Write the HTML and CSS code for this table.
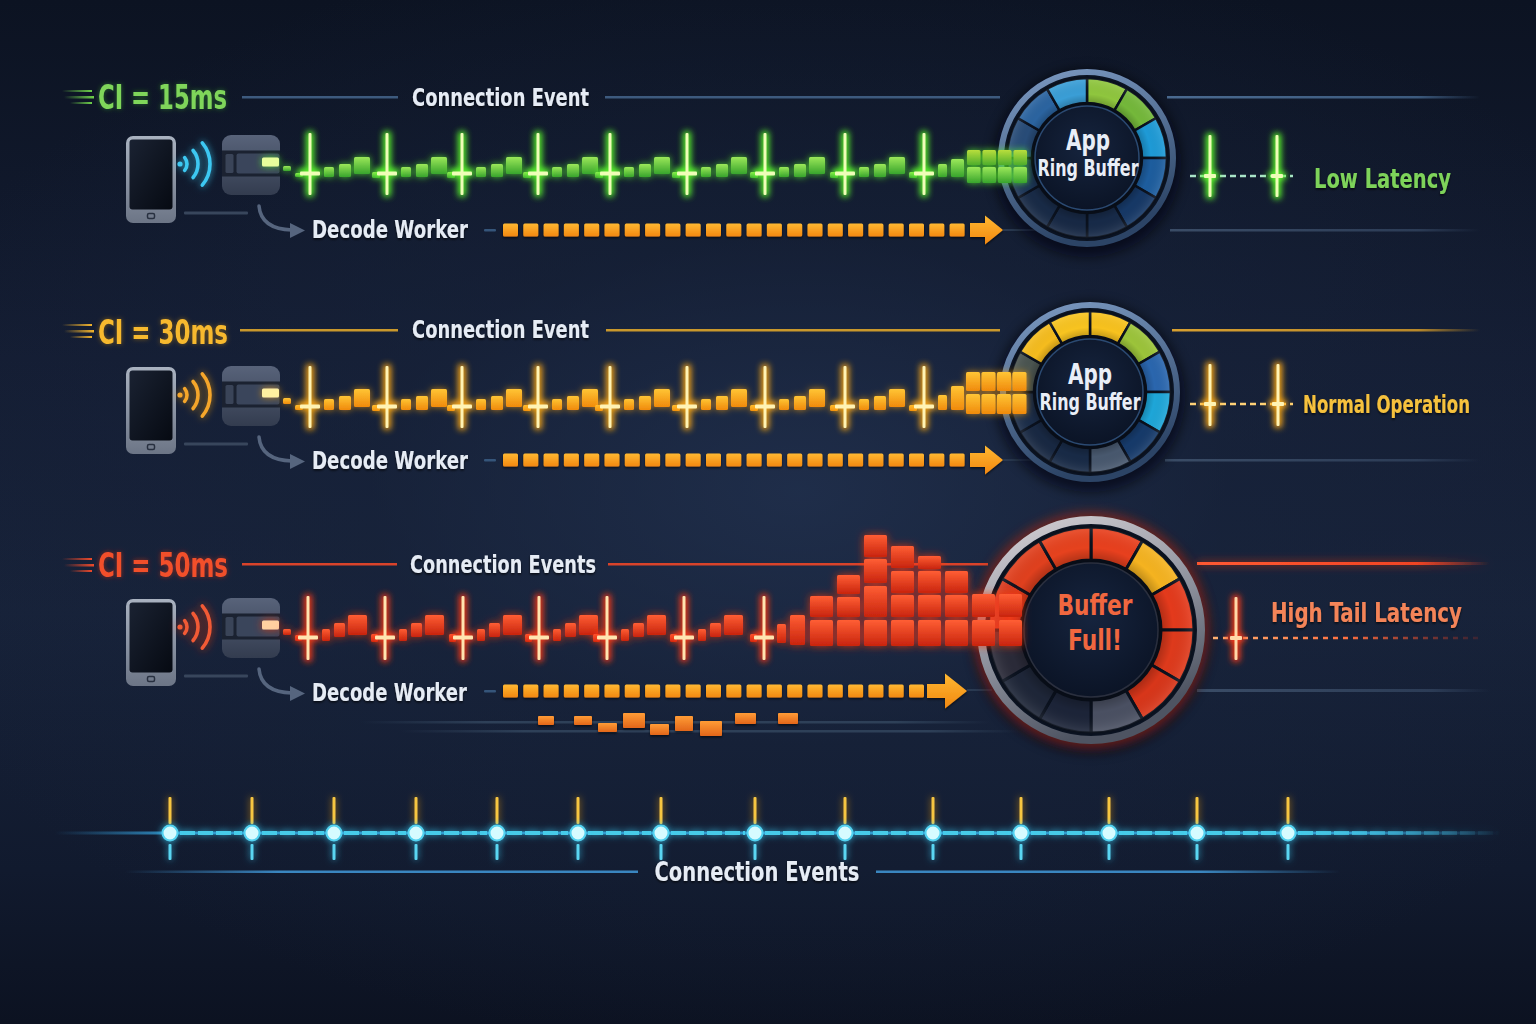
FILE: index.html
```html
<!DOCTYPE html>
<html lang="en">
<head>
<meta charset="utf-8">
<title>Connection Interval vs Ring Buffer Latency</title>
<link rel="stylesheet" href="styles.css">
</head>
<body>
<main class="scene">
  <svg class="defs" width="0" height="0" aria-hidden="true">
    <defs>
      <linearGradient id="gGreen" x1="0" y1="0" x2="0" y2="1"><stop offset="0" stop-color="#9be85a"/><stop offset="1" stop-color="#38a42c"/></linearGradient>
      <linearGradient id="gLime" x1="0" y1="0" x2="0" y2="1"><stop offset="0" stop-color="#b8de3c"/><stop offset="1" stop-color="#4fae2c"/></linearGradient>
      <linearGradient id="gAmber" x1="0" y1="0" x2="0" y2="1"><stop offset="0" stop-color="#ffc535"/><stop offset="1" stop-color="#f08a0c"/></linearGradient>
      <linearGradient id="gRed" x1="0" y1="0" x2="0" y2="1"><stop offset="0" stop-color="#ff5e34"/><stop offset="1" stop-color="#c8240e"/></linearGradient>
      <linearGradient id="gOrange" x1="0" y1="0" x2="0" y2="1"><stop offset="0" stop-color="#ffb832"/><stop offset="1" stop-color="#f28810"/></linearGradient>
      <linearGradient id="gOrangeLow" x1="0" y1="0" x2="0" y2="1"><stop offset="0" stop-color="#ff9c36"/><stop offset="1" stop-color="#e2661a"/></linearGradient>
      <linearGradient id="phoneFrame" x1="0" y1="0" x2="0" y2="1"><stop offset="0" stop-color="#a9b2c0"/><stop offset="1" stop-color="#6c7586"/></linearGradient>
      <linearGradient id="phoneScreen" x1="0" y1="0" x2="1" y2="1"><stop offset="0" stop-color="#1a2232"/><stop offset="1" stop-color="#060a12"/></linearGradient>
      <linearGradient id="devBody" x1="0" y1="0" x2="0" y2="1"><stop offset="0" stop-color="#58637a"/><stop offset="1" stop-color="#333c4f"/></linearGradient>
      <linearGradient id="ringBlue" x1="0" y1="0" x2="0.3" y2="1"><stop offset="0" stop-color="#7e9cc4"/><stop offset="1" stop-color="#2c4466"/></linearGradient>
      <linearGradient id="ringSilver" x1="0" y1="0" x2="0.4" y2="1"><stop offset="0" stop-color="#d8d4d8"/><stop offset="0.6" stop-color="#8a8e9a"/><stop offset="1" stop-color="#4e5462"/></linearGradient>
      <radialGradient id="coreFill" cx="0.5" cy="0.4" r="0.6"><stop offset="0" stop-color="#16243e"/><stop offset="1" stop-color="#0b1426"/></radialGradient>
      <radialGradient id="segShade" cx="0.5" cy="0.5" r="0.5"><stop offset="0.62" stop-color="#000" stop-opacity="0.35"/><stop offset="0.8" stop-color="#000" stop-opacity="0"/><stop offset="0.97" stop-color="#fff" stop-opacity="0.08"/><stop offset="1" stop-color="#000" stop-opacity="0.2"/></radialGradient>
      <linearGradient id="spdGreen" x1="0" y1="0" x2="1" y2="0"><stop offset="0" stop-color="#6fd24a" stop-opacity="0"/><stop offset="1" stop-color="#6fd24a"/></linearGradient>
      <linearGradient id="spdAmber" x1="0" y1="0" x2="1" y2="0"><stop offset="0" stop-color="#f5b52c" stop-opacity="0"/><stop offset="1" stop-color="#f5b52c"/></linearGradient>
      <linearGradient id="spdRed" x1="0" y1="0" x2="1" y2="0"><stop offset="0" stop-color="#f04a2a" stop-opacity="0"/><stop offset="1" stop-color="#f04a2a"/></linearGradient>
      <linearGradient id="fadeBlueR" x1="0" y1="0" x2="1" y2="0"><stop offset="0" stop-color="#4a6a90"/><stop offset="0.8" stop-color="#3c5a7e"/><stop offset="1" stop-color="#3c5a7e" stop-opacity="0"/></linearGradient>
      <linearGradient id="fadeAmberR" x1="0" y1="0" x2="1" y2="0"><stop offset="0" stop-color="#d8a030"/><stop offset="0.8" stop-color="#b8882a"/><stop offset="1" stop-color="#b8882a" stop-opacity="0"/></linearGradient>
      <linearGradient id="fadeRedR" x1="0" y1="0" x2="1" y2="0"><stop offset="0" stop-color="#ff5a32"/><stop offset="0.75" stop-color="#f04424"/><stop offset="1" stop-color="#f04424" stop-opacity="0"/></linearGradient>
      <linearGradient id="fadeDimR" x1="0" y1="0" x2="1" y2="0"><stop offset="0" stop-color="#3a4c66"/><stop offset="0.8" stop-color="#2c3c56"/><stop offset="1" stop-color="#2c3c56" stop-opacity="0"/></linearGradient>
      <linearGradient id="fadeDimBoth" x1="0" y1="0" x2="1" y2="0"><stop offset="0" stop-color="#2e4058" stop-opacity="0"/><stop offset="0.2" stop-color="#2e4058"/><stop offset="0.85" stop-color="#2e4058"/><stop offset="1" stop-color="#2e4058" stop-opacity="0"/></linearGradient>
      <linearGradient id="cyanFade" x1="0" y1="0" x2="1" y2="0"><stop offset="0" stop-color="#2a7ab0" stop-opacity="0"/><stop offset="0.08" stop-color="#2f8cc0"/><stop offset="0.9" stop-color="#2f8cc0"/><stop offset="1" stop-color="#2a7ab0" stop-opacity="0"/></linearGradient>
      <linearGradient id="blueFadeL" x1="0" y1="0" x2="1" y2="0"><stop offset="0" stop-color="#3a86c0" stop-opacity="0"/><stop offset="0.3" stop-color="#3a86c0"/><stop offset="1" stop-color="#3a86c0"/></linearGradient>
      <linearGradient id="blueFadeR" x1="0" y1="0" x2="1" y2="0"><stop offset="0" stop-color="#3a86c0"/><stop offset="0.7" stop-color="#3a86c0"/><stop offset="1" stop-color="#3a86c0" stop-opacity="0"/></linearGradient>
      <linearGradient id="redDotFade" gradientUnits="userSpaceOnUse" x1="1213" y1="0" x2="1480" y2="0"><stop offset="0" stop-color="#ffb070"/><stop offset="0.5" stop-color="#ff7040"/><stop offset="1" stop-color="#c03020" stop-opacity="0.2"/></linearGradient>
      <linearGradient id="cyanDashFade" gradientUnits="userSpaceOnUse" x1="1298" y1="0" x2="1500" y2="0"><stop offset="0" stop-color="#46cbe8"/><stop offset="1" stop-color="#46cbe8" stop-opacity="0"/></linearGradient>

      <filter id="fGreen" filterUnits="userSpaceOnUse" x="-50" y="-50" width="1650" height="1130">
        <feGaussianBlur in="SourceAlpha" stdDeviation="3.5" result="b"/><feFlood flood-color="#5cff2a" flood-opacity="0.75"/><feComposite in2="b" operator="in" result="g"/>
        <feMerge><feMergeNode in="g"/><feMergeNode in="SourceGraphic"/></feMerge></filter>
      <filter id="fAmber" filterUnits="userSpaceOnUse" x="-50" y="-50" width="1650" height="1130">
        <feGaussianBlur in="SourceAlpha" stdDeviation="3.5" result="b"/><feFlood flood-color="#ffa516" flood-opacity="0.7"/><feComposite in2="b" operator="in" result="g"/>
        <feMerge><feMergeNode in="g"/><feMergeNode in="SourceGraphic"/></feMerge></filter>
      <filter id="fRed" filterUnits="userSpaceOnUse" x="-50" y="-50" width="1650" height="1130">
        <feGaussianBlur in="SourceAlpha" stdDeviation="4" result="b"/><feFlood flood-color="#ff3812" flood-opacity="0.75"/><feComposite in2="b" operator="in" result="g"/>
        <feMerge><feMergeNode in="g"/><feMergeNode in="SourceGraphic"/></feMerge></filter>
      <filter id="fCyan" filterUnits="userSpaceOnUse" x="-50" y="-50" width="1650" height="1130">
        <feGaussianBlur in="SourceAlpha" stdDeviation="3.5" result="b"/><feFlood flood-color="#3ad4ff" flood-opacity="0.8"/><feComposite in2="b" operator="in" result="g"/>
        <feMerge><feMergeNode in="g"/><feMergeNode in="SourceGraphic"/></feMerge></filter>
      <filter id="blur3" filterUnits="userSpaceOnUse" x="-50" y="-50" width="1650" height="1130"><feGaussianBlur stdDeviation="3"/></filter>
      <filter id="blur6" filterUnits="userSpaceOnUse" x="-50" y="-50" width="1650" height="1130"><feGaussianBlur stdDeviation="6"/></filter>
      <filter id="shadow" filterUnits="userSpaceOnUse" x="-50" y="-50" width="1650" height="1130"><feDropShadow dx="0" dy="1.5" stdDeviation="1.2" flood-color="#000" flood-opacity="0.6"/></filter>
      <filter id="txtShadow" filterUnits="userSpaceOnUse" x="-50" y="-50" width="1650" height="1130"><feDropShadow dx="0" dy="1.5" stdDeviation="1.2" flood-color="#000" flood-opacity="0.7"/></filter>
      <filter id="txtGreen" filterUnits="userSpaceOnUse" x="-50" y="-50" width="1650" height="1130"><feDropShadow dx="0" dy="0" stdDeviation="2.5" flood-color="#3fbf2a" flood-opacity="0.45"/></filter>
      <filter id="txtAmber" filterUnits="userSpaceOnUse" x="-50" y="-50" width="1650" height="1130"><feDropShadow dx="0" dy="0" stdDeviation="2.5" flood-color="#f0a010" flood-opacity="0.45"/></filter>
      <filter id="txtRed" filterUnits="userSpaceOnUse" x="-50" y="-50" width="1650" height="1130"><feDropShadow dx="0" dy="0" stdDeviation="2.5" flood-color="#ff3010" flood-opacity="0.5"/></filter>
    </defs>
  </svg>

  <section class="lane lane-1">
    <svg class="canvas" viewBox="0 0 1536 280">
      <g class="rules">
        <rect class="speed-green" x="62" y="90" width="30" height="2"/>
        <rect class="speed-green" x="64" y="96" width="30" height="2.5"/>
        <rect class="speed-green" x="70" y="102" width="22" height="2"/>
        <rect class="rule-blue" x="242" y="96" width="156" height="2.5"/>
        <rect class="rule-blue" x="605" y="96" width="395" height="2.5"/>
        <rect class="rule-blue-fade" x="1167" y="96" width="313" height="2.5"/>
        <rect class="rule-dim" x="1003" y="229" width="45" height="2"/>
        <rect class="rule-dim-fade" x="1170" y="229" width="310" height="2.5"/>
      </g>
      <g id="art1"></g>
      <g class="labels">
        <text class="ci ci-green" x="98" y="109" textLength="129" lengthAdjust="spacingAndGlyphs">CI = 15ms</text>
        <text class="lbl" x="412" y="106" textLength="177" lengthAdjust="spacingAndGlyphs">Connection Event</text>
        <text class="lbl" x="312" y="238" textLength="156" lengthAdjust="spacingAndGlyphs">Decode Worker</text>
        <text class="gauge-app" x="1088" y="150" textLength="44" lengthAdjust="spacingAndGlyphs">App</text>
        <text class="gauge-ring" x="1088" y="176" textLength="101" lengthAdjust="spacingAndGlyphs">Ring Buffer</text>
        <text class="state state-green" x="1314" y="188" textLength="137" lengthAdjust="spacingAndGlyphs">Low Latency</text>
      </g>
    </svg>
  </section>

  <section class="lane lane-2">
    <svg class="canvas" viewBox="0 280 1536 230">
      <g class="rules">
        <rect class="speed-amber" x="62" y="324" width="30" height="2"/>
        <rect class="speed-amber" x="64" y="330" width="30" height="2.5"/>
        <rect class="speed-amber" x="70" y="336" width="22" height="2"/>
        <rect class="rule-amber" x="240" y="329" width="158" height="2.5"/>
        <rect class="rule-amber" x="606" y="329" width="394" height="2.5"/>
        <rect class="rule-amber-fade" x="1172" y="329" width="308" height="2.5"/>
        <rect class="rule-dim" x="1003" y="459" width="45" height="2"/>
        <rect class="rule-dim-fade" x="1165" y="459" width="315" height="2.5"/>
      </g>
      <g id="art2"></g>
      <g class="labels">
        <text class="ci ci-amber" x="98" y="344" textLength="130" lengthAdjust="spacingAndGlyphs">CI = 30ms</text>
        <text class="lbl" x="412" y="338" textLength="177" lengthAdjust="spacingAndGlyphs">Connection Event</text>
        <text class="lbl" x="312" y="469" textLength="156" lengthAdjust="spacingAndGlyphs">Decode Worker</text>
        <text class="gauge-app" x="1090" y="384" textLength="44" lengthAdjust="spacingAndGlyphs">App</text>
        <text class="gauge-ring" x="1090" y="410" textLength="101" lengthAdjust="spacingAndGlyphs">Ring Buffer</text>
        <text class="state state-amber" x="1303" y="413" textLength="167" lengthAdjust="spacingAndGlyphs">Normal Operation</text>
      </g>
    </svg>
  </section>

  <section class="lane lane-3">
    <svg class="canvas" viewBox="0 510 1536 260">
      <g class="rules">
        <rect class="speed-red" x="62" y="558" width="30" height="2"/>
        <rect class="speed-red" x="64" y="564" width="30" height="2.5"/>
        <rect class="speed-red" x="70" y="570" width="22" height="2"/>
        <rect class="rule-red" x="242" y="563" width="155" height="2.5"/>
        <rect class="rule-red" x="608" y="563" width="380" height="2.5"/>
        <rect class="rule-red-glow" x="1197" y="562" width="293" height="3"/>
        <rect class="rule-dim" x="967" y="689" width="25" height="2"/>
        <rect class="rule-dim-fade" x="1197" y="689" width="293" height="3"/>
        <rect class="rule-dim-both" x="360" y="721" width="630" height="2.5"/>
        <rect class="rule-dim-both" x="400" y="730" width="620" height="2.5"/>
      </g>
      <g id="art3"></g>
      <g class="labels">
        <text class="ci ci-red" x="98" y="577" textLength="130" lengthAdjust="spacingAndGlyphs">CI = 50ms</text>
        <text class="lbl" x="410" y="573" textLength="186" lengthAdjust="spacingAndGlyphs">Connection Events</text>
        <text class="lbl" x="312" y="701" textLength="155" lengthAdjust="spacingAndGlyphs">Decode Worker</text>
        <text class="gauge-full" x="1095" y="615" textLength="75" lengthAdjust="spacingAndGlyphs">Buffer</text>
        <text class="gauge-full" x="1095" y="650" textLength="54" lengthAdjust="spacingAndGlyphs">Full!</text>
        <text class="state state-red" x="1271" y="622" textLength="191" lengthAdjust="spacingAndGlyphs">High Tail Latency</text>
      </g>
    </svg>
  </section>

  <section class="lane lane-4">
    <svg class="canvas" viewBox="0 770 1536 254">
      <g class="rules">
        <rect class="rule-bl" x="125" y="870.5" width="513" height="2.5"/>
        <rect class="rule-br" x="876" y="870.5" width="464" height="2.5"/>
      </g>
      <g id="art4"></g>
      <g class="labels">
        <text class="tl-label" x="757" y="881" textLength="205" lengthAdjust="spacingAndGlyphs">Connection Events</text>
      </g>
    </svg>
  </section>
</main>
<script src="script.js"></script>
</body>
</html>
```

FILE: styles.css
```css
* { box-sizing: border-box; }
html, body { margin: 0; padding: 0; }
body {
  width: 1536px;
  height: 1024px;
  overflow: hidden;
  background: #0b1120;
}
.scene {
  width: 1536px;
  height: 1024px;
  display: flex;
  flex-direction: column;
  overflow: hidden;
  background:
    radial-gradient(ellipse 62% 55% at 52% 48%, rgba(34, 50, 80, 0.75) 0%, rgba(24, 36, 60, 0.5) 45%, rgba(10, 16, 30, 0) 100%),
    linear-gradient(180deg, #0c1322 0%, #141d33 35%, #172239 60%, #111a2e 85%, #0c1221 100%);
}
.defs { display: block; width: 0; height: 0; flex: none; }
.lane { flex: none; width: 1536px; }
.canvas { display: block; width: 1536px; overflow: visible; }
.lane-1 .canvas { height: 280px; }
.lane-2 .canvas { height: 230px; }
.lane-3 .canvas { height: 260px; }
.lane-4 .canvas { height: 254px; }

.speed-green { fill: url(#spdGreen); }
.speed-amber { fill: url(#spdAmber); }
.speed-red { fill: url(#spdRed); }
.rule-blue { fill: #3d5a7e; }
.rule-blue-fade { fill: url(#fadeBlueR); }
.rule-amber { fill: #c9982c; }
.rule-amber-fade { fill: url(#fadeAmberR); }
.rule-red { fill: #d9432a; }
.rule-red-glow { fill: url(#fadeRedR); filter: url(#fRed); }
.rule-dim { fill: #2a3a52; }
.rule-dim-fade { fill: url(#fadeDimR); }
.rule-dim-both { fill: url(#fadeDimBoth); }
.rule-bl { fill: url(#blueFadeL); }
.rule-br { fill: url(#blueFadeR); }

.canvas text {
  font-family: "Liberation Sans Narrow", "DejaVu Sans Condensed", "Liberation Sans", sans-serif;
  font-weight: 700;
  font-stretch: condensed;
}
.ci { font-size: 33px; }
.ci-green { fill: #7fd65a; filter: url(#txtGreen); }
.ci-amber { fill: #f7b92e; filter: url(#txtAmber); }
.ci-red { fill: #f2502c; filter: url(#txtRed); }
.lbl { font-size: 25.5px; fill: #e6ecf5; filter: url(#txtShadow); }
.gauge-app { font-size: 27.5px; fill: #e9eef7; text-anchor: middle; }
.gauge-ring { font-size: 22.5px; fill: #e9eef7; text-anchor: middle; }
.gauge-full { font-size: 28px; fill: #f0673f; text-anchor: middle; }
.state { font-size: 27px; filter: url(#txtShadow); }
.state-green { fill: #7ed35a; }
.state-amber { fill: #f6c13d; font-size: 24px; }
.state-red { fill: #f48458; font-size: 27px; }
.tl-label { font-size: 27px; fill: #e6ecf5; text-anchor: middle; filter: url(#txtShadow); }
```

FILE: script.js
```js
(function () {
  var NS = 'http://www.w3.org/2000/svg';
  function mk(p, tag, a) {
    var e = document.createElementNS(NS, tag);
    for (var k in a) e.setAttribute(k, a[k]);
    p.appendChild(e);
    return e;
  }
  function box(p, x, y, w, h, fill, rx) {
    return mk(p, 'rect', { x: x, y: y, width: w, height: h, rx: rx == null ? 1.5 : rx, fill: fill });
  }

  function phone(p, dy) {
    var g = mk(p, 'g', { transform: 'translate(0 ' + dy + ')' });
    mk(g, 'rect', { x: 126, y: 136, width: 50, height: 87, rx: 7, fill: 'url(#phoneFrame)' });
    mk(g, 'rect', { x: 129.5, y: 139.5, width: 43, height: 70, rx: 3, fill: 'url(#phoneScreen)' });
    mk(g, 'rect', { x: 147.5, y: 213.5, width: 7, height: 5, rx: 1.5, fill: 'none', stroke: '#283040', 'stroke-width': 1.5 });
    box(g, 184, 211.5, 64, 3, '#38465c', 1);
    mk(g, 'path', { d: 'M259 206 Q 261 229 292 230', fill: 'none', stroke: '#56657e', 'stroke-width': 3.5, 'stroke-linecap': 'round' });
    mk(g, 'path', { d: 'M290 223 L305 230.5 L290 238 Z', fill: '#56657e' });
  }

  function wifi(p, dy, color, filt) {
    var g = mk(p, 'g', { transform: 'translate(0 ' + dy + ')', filter: filt });
    var cx = 177, cy = 164;
    mk(g, 'circle', { cx: 180, cy: cy, r: 2.6, fill: color });
    [10, 21, 33].forEach(function (r) {
      var a = 40 * Math.PI / 180;
      mk(g, 'path', {
        d: 'M' + (cx + r * Math.cos(a)) + ' ' + (cy - r * Math.sin(a)) + ' A' + r + ' ' + r + ' 0 0 1 ' + (cx + r * Math.cos(a)) + ' ' + (cy + r * Math.sin(a)),
        fill: 'none', stroke: color, 'stroke-width': 3.6, 'stroke-linecap': 'round'
      });
    });
  }

  function device(p, dy, led, filt) {
    var g = mk(p, 'g', { transform: 'translate(0 ' + dy + ')' });
    mk(g, 'rect', { x: 222, y: 135, width: 58, height: 60, rx: 9, fill: 'url(#devBody)' });
    box(g, 222, 150.5, 58, 26, '#1b2231', 0);
    box(g, 225.5, 154, 8, 19, '#3a4458', 1.5);
    box(g, 236.5, 153.5, 43, 20, '#3a455b', 2);
    mk(g, 'rect', { x: 262, y: 157.5, width: 17, height: 9, rx: 1.5, fill: led, filter: filt });
  }

  function wave(p, c) {
    var blocks = mk(p, 'g', { filter: c.blockGlow });
    c.lead.forEach(function (b) { box(blocks, b[0], c.base + b[1], b[2], b[3], c.fill); });
    for (var i = 0; i < c.spikes.length - 1; i++) {
      var sx = c.spikes[i], nx = c.spikes[i + 1];
      c.pat.forEach(function (b) { box(blocks, sx + b[0], c.base + b[1], b[2], b[3], c.fill); });
      box(blocks, nx + c.dip[0], c.base + c.dip[1], c.dip[2], c.dip[3], c.fill);
    }
    c.tail.forEach(function (b) { box(blocks, b[0], b[1], b[2], b[3], b[4] || c.fill, b[5] == null ? 1.5 : b[5]); });
    var glow = mk(p, 'g', { filter: 'url(#blur3)', opacity: 0.95 });
    var core = mk(p, 'g', {});
    c.spikes.forEach(function (sx) {
      box(glow, sx - 4, c.sTop - 2, 8, c.sBot - c.sTop + 4, c.glow, 3);
      box(glow, sx - 12, c.base - 9, 24, 9, c.glow, 3);
      box(core, sx - 1.5, c.sTop, 3, c.sBot - c.sTop, c.core, 1);
      box(core, sx - 10, c.base - 5.5, 20, 4, c.core, 1);
    });
  }

  function decode(p, y, n, ax, shaft, head) {
    box(p, 484, y - 1, 12, 2.5, '#35557a', 1);
    var g = mk(p, 'g', { filter: 'url(#shadow)' });
    for (var i = 0; i < n; i++) box(g, 503 + i * 20.3, y - 6.5, 15, 13, 'url(#gOrange)', 1.5);
    var h = head * 0.8;
    mk(g, 'path', {
      d: 'M' + ax + ' ' + (y - 7) + ' H' + (ax + shaft) + ' V' + (y - h) + ' L' + (ax + shaft + head) + ' ' + y + ' L' + (ax + shaft) + ' ' + (y + h) + ' V' + (y + 7) + ' H' + ax + ' Z',
      fill: 'url(#gOrange)'
    });
  }

  function sector(cx, cy, r0, r1, a0, a1) {
    function pt(r, a) { var t = a * Math.PI / 180; return [cx + r * Math.sin(t), cy - r * Math.cos(t)]; }
    var A = pt(r1, a0), B = pt(r1, a1), C = pt(r0, a1), D = pt(r0, a0);
    return 'M' + A[0] + ' ' + A[1] + ' A' + r1 + ' ' + r1 + ' 0 0 1 ' + B[0] + ' ' + B[1] +
      ' L' + C[0] + ' ' + C[1] + ' A' + r0 + ' ' + r0 + ' 0 0 0 ' + D[0] + ' ' + D[1] + ' Z';
  }

  function gauge(p, o) {
    var g = mk(p, 'g', {});
    mk(g, 'circle', { cx: o.cx, cy: o.cy + 5, r: o.R + 8, fill: '#03060d', opacity: 0.6, filter: 'url(#blur6)' });
    if (o.halo) mk(g, 'circle', { cx: o.cx, cy: o.cy, r: o.R + 2, fill: 'none', stroke: o.halo, 'stroke-width': 9, opacity: 0.55, filter: 'url(#blur6)' });
    mk(g, 'circle', { cx: o.cx, cy: o.cy, r: o.R, fill: '#0b1322', stroke: o.ring, 'stroke-width': o.ringW });
    var n = o.colors.length, st = 360 / n;
    o.colors.forEach(function (c, i) {
      mk(g, 'path', { d: sector(o.cx, o.cy, o.rIn, o.rOut, i * st, (i + 1) * st), fill: c, stroke: '#0a111e', 'stroke-width': o.sep });
    });
    mk(g, 'circle', { cx: o.cx, cy: o.cy, r: o.rOut, fill: 'url(#segShade)' });
    mk(g, 'circle', { cx: o.cx, cy: o.cy, r: o.rCore, fill: 'url(#coreFill)', stroke: o.coreStroke, 'stroke-width': 1.5 });
  }

  function mini(p, o) {
    mk(p, 'line', { x1: o.x0, y1: o.y, x2: o.x1, y2: o.y, stroke: o.dash, 'stroke-width': 2.5, 'stroke-dasharray': o.pattern });
    var glow = mk(p, 'g', { filter: 'url(#blur3)' });
    var core = mk(p, 'g', {});
    o.xs.forEach(function (x) {
      box(glow, x - 4, o.top - 2, 8, o.bot - o.top + 4, o.glow, 3);
      box(glow, x - 9, o.y - 4, 18, 8, o.glow, 3);
      box(core, x - 1.5, o.top, 3, o.bot - o.top, o.core, 1);
      box(core, x - 6, o.y - 2, 12, 4, o.core, 1);
    });
  }

  var spikes = [310, 387, 462, 538, 610, 687, 765, 845, 924];

  /* ---------- lane 1 ---------- */
  var a1 = document.getElementById('art1');
  phone(a1, 0);
  wifi(a1, 0, '#3cc8f2', 'url(#fCyan)');
  device(a1, 0, '#e9ff9c', 'url(#fGreen)');
  gauge(a1, {
    cx: 1087, cy: 158, R: 86, ringW: 6, rIn: 55, rOut: 80, rCore: 52, sep: 2.5,
    ring: 'url(#ringBlue)', coreStroke: '#2b4a72',
    colors: ['#8fc63e', '#74b83a', '#1e9ad6', '#1d5d9e', '#163866', '#172a48', '#172844', '#182a46', '#1c3456', '#284c78', '#2b64a0', '#3a9ed6']
  });
  wave(a1, {
    base: 177, spikes: spikes, sTop: 133, sBot: 195,
    fill: 'url(#gGreen)', blockGlow: 'url(#fGreen)', glow: '#5cff2a', core: '#effdb8',
    lead: [[283, -11, 8, 5], [295, -4, 8, 4]],
    pat: [[14, -10, 10, 10], [29, -13, 12, 13], [44, -20, 16, 17]],
    dip: [-15, -5, 8, 6],
    tail: [[938, 164, 9, 13], [951, 159, 13, 18],
      [967, 150, 13.5, 15, 'url(#gLime)'], [982.5, 150, 13.5, 15, 'url(#gLime)'], [998, 150, 13.5, 15, 'url(#gLime)'], [1013.5, 150, 13.5, 15, 'url(#gLime)'],
      [967, 167, 13.5, 16, 'url(#gGreen)'], [982.5, 167, 13.5, 16, 'url(#gGreen)'], [998, 167, 13.5, 16, 'url(#gGreen)'], [1013.5, 167, 13.5, 16, 'url(#gGreen)']]
  });
  decode(a1, 230, 23, 970, 15, 18);
  mini(a1, { y: 176, xs: [1210, 1277], top: 135, bot: 197, x0: 1190, x1: 1293, dash: '#a9e4c8', pattern: '6 4', glow: '#5cff2a', core: '#effdb8' });

  /* ---------- lane 2 ---------- */
  var a2 = document.getElementById('art2');
  phone(a2, 231);
  wifi(a2, 231, '#f5a62a', 'url(#fAmber)');
  device(a2, 231, '#fff0a0', 'url(#fAmber)');
  gauge(a2, {
    cx: 1090, cy: 392, R: 87, ringW: 6, rIn: 56, rOut: 81, rCore: 53, sep: 2.5,
    ring: 'url(#ringBlue)', coreStroke: '#2b4a72',
    colors: ['#f8c21e', '#9cc43a', '#2a66ae', '#1ea6d8', '#163a6a', '#48586e', '#182a46', '#182842', '#1a2c48', '#4a5450', '#f5bc1e', '#f8c420']
  });
  wave(a2, {
    base: 410, spikes: spikes, sTop: 366, sBot: 428,
    fill: 'url(#gAmber)', blockGlow: 'url(#fAmber)', glow: '#ffaa14', core: '#fff3b4',
    lead: [[283, -12, 8, 6], [295, -5, 8, 5]],
    pat: [[14, -11, 10, 11], [29, -14, 12, 14], [44, -21, 16, 18]],
    dip: [-15, -5, 8, 6],
    tail: [[938, 395, 9, 15], [951, 386, 13, 24],
      [966, 372, 14, 19], [981.5, 372, 14, 19], [997, 372, 14, 19], [1012.5, 372, 14, 19],
      [966, 394, 14, 20], [981.5, 394, 14, 20], [997, 394, 14, 20], [1012.5, 394, 14, 20]]
  });
  decode(a2, 460, 23, 970, 15, 18);
  mini(a2, { y: 404, xs: [1210, 1278], top: 364, bot: 426, x0: 1190, x1: 1293, dash: '#ffd277', pattern: '6 4', glow: '#ffaa14', core: '#fff3b4' });

  /* ---------- lane 3 ---------- */
  var a3 = document.getElementById('art3');
  phone(a3, 463);
  wifi(a3, 463, '#f25a34', 'url(#fRed)');
  device(a3, 463, '#ffd0a0', 'url(#fRed)');
  var low = mk(a3, 'g', { filter: 'url(#shadow)' });
  [[538, 716, 16, 9], [574, 716, 18, 9], [598, 723, 19, 9], [623, 713, 22, 15], [650, 724, 19, 11], [675, 716, 18, 15], [700, 721, 22, 15], [735, 713, 21, 11], [778, 713, 20, 11]]
    .forEach(function (b) { box(low, b[0], b[1], b[2], b[3], 'url(#gOrangeLow)', 1); });
  gauge(a3, {
    cx: 1091, cy: 630, R: 110, ringW: 8, rIn: 70, rOut: 103, rCore: 67, sep: 3,
    ring: 'url(#ringSilver)', coreStroke: '#2a2f3e', halo: '#ff3a18',
    colors: ['#e8401e', '#f5b320', '#e43a1c', '#de3a1c', '#d8361a', '#4a5062', '#1c2438', '#1e2638', '#2a2a38', '#d83a1e', '#e0401e', '#e6421e']
  });
  wave(a3, {
    base: 641, spikes: [308, 385, 463, 539, 607, 684, 764], sTop: 596, sBot: 660,
    fill: 'url(#gRed)', blockGlow: 'url(#fRed)', glow: '#ff3a14', core: '#ffe4b0',
    lead: [[283, -12, 8, 6], [295, -6, 7, 6]],
    pat: [[14, -12, 8, 12], [26, -18, 11, 14], [40, -26, 19, 20]],
    dip: [-14, -7, 7, 8],
    tail: [[777, 624, 9, 19], [790, 615, 15, 30],
      [810, 596, 23, 21], [810, 620, 23, 26],
      [837, 575, 23, 19], [837, 597, 23, 20], [837, 620, 23, 26],
      [864, 535, 23, 22], [864, 559, 23, 24], [864, 586, 23, 31], [864, 620, 23, 26],
      [891, 546, 23, 22], [891, 571, 23, 22], [891, 595, 23, 22], [891, 620, 23, 26],
      [918, 556, 23, 13], [918, 571, 23, 22], [918, 595, 23, 22], [918, 620, 23, 26],
      [945, 571, 23, 22], [945, 595, 23, 22], [945, 620, 23, 26],
      [972, 594, 23, 23], [972, 620, 23, 26],
      [999, 594, 23, 23], [999, 620, 23, 26]]
  });
  decode(a3, 691, 21, 927, 18, 22);
  mini(a3, { y: 638, xs: [1236], top: 597, bot: 660, x0: 1213, x1: 1480, dash: 'url(#redDotFade)', pattern: '5 5', glow: '#ff3a14', core: '#ffd8a8' });

  /* ---------- timeline ---------- */
  var a4 = document.getElementById('art4');
  var xs = [170, 252, 334, 416, 497, 578, 661, 755, 845, 933, 1021, 1109, 1197, 1288];
  var y = 833;
  box(a4, 55, y - 1.5, 1445, 3, 'url(#cyanFade)', 1);
  var dashes = mk(a4, 'g', { filter: 'url(#fCyan)' });
  for (var i = 0; i < xs.length - 1; i++) {
    mk(dashes, 'line', { x1: xs[i] + 10, y1: y, x2: xs[i + 1] - 10, y2: y, stroke: '#46cbe8', 'stroke-width': 4, 'stroke-dasharray': '15 3' });
  }
  mk(dashes, 'line', { x1: 1298, y1: y, x2: 1500, y2: y, stroke: 'url(#cyanDashFade)', 'stroke-width': 4, 'stroke-dasharray': '15 3' });
  var up = mk(a4, 'g', { filter: 'url(#fAmber)' });
  xs.forEach(function (x) { box(up, x - 1.5, 797, 3, 27, '#f7c640', 1); });
  var dn = mk(a4, 'g', { filter: 'url(#fCyan)' });
  xs.forEach(function (x) {
    box(dn, x - 1.5, 844, 3, 16, '#5ad6f2', 1);
    mk(dn, 'circle', { cx: x, cy: y, r: 7.5, fill: '#d6fbff', stroke: '#52d2f0', 'stroke-width': 2 });
  });
})();
```
